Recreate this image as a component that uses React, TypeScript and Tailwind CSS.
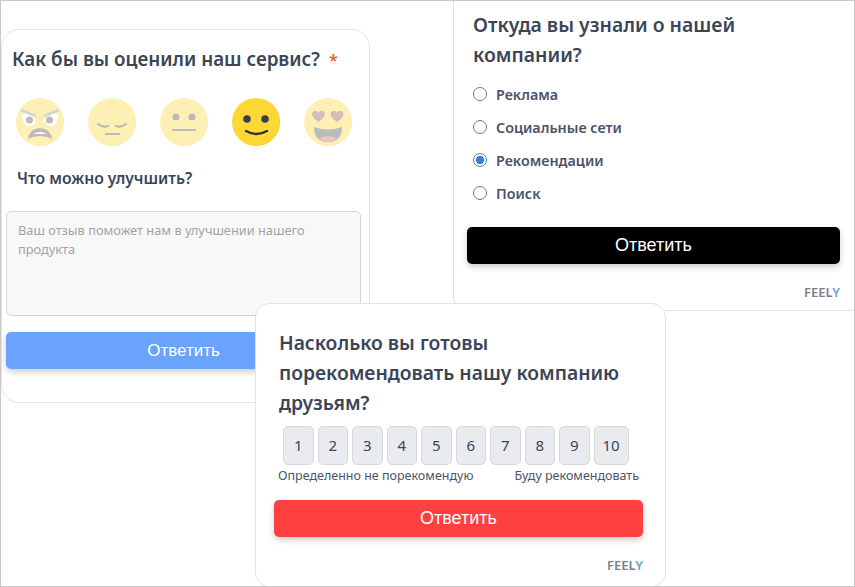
const font = "font-['Noto_Sans',sans-serif]"
const heading = 'font-semibold text-[#3a4557]'

function Face({ children, active }: { children: React.ReactNode; active?: boolean }) {
  return (
    <svg width="48" height="48" viewBox="0 0 48 48" className={active ? '' : 'opacity-[0.36]'}>
      <circle cx="24" cy="24" r="24" fill="#fdd835" />
      <path d="M34 2a24 24 0 0 1-22 43a24 24 0 0 0 36-21a24 24 0 0 0-14-22z" fill="#f9b92b" opacity="0.45" />
      {children}
    </svg>
  )
}

function Faces() {
  return (
    <div className="flex gap-[24px] ml-[14px] mt-[25px]">
      <Face>
        <path d="M6 16q8-2 14 6q-1 6-7 6q-7 0-7-12zM42 16q-8-2-14 6q1 6 7 6q7 0 7-12z" fill="#fff" />
        <path d="M5 12l15 6M43 12l-15 6" stroke="#8a8a8a" strokeWidth="2.5" fill="none" />
        <circle cx="13.5" cy="22" r="3.5" fill="#444" />
        <circle cx="33.5" cy="22" r="3.5" fill="#444" />
        <path d="M12 41q1-10 12-11q11 1 12 11q-6-3-12-3t-12 3z" fill="#444" />
        <path d="M17 36q7-4 14 0z" fill="#fff" />
      </Face>
      <Face>
        <path d="M9 20q4-3 8-4M39 20q-4-3-8-4" stroke="#f0b840" strokeWidth="1.2" fill="none" />
        <path d="M10 26q5 4 10 2M38 26q-5 4-10 2" stroke="#444" strokeWidth="2.2" fill="none" strokeLinecap="round" />
        <path d="M18 36h13" stroke="#444" strokeWidth="2.2" strokeLinecap="round" />
      </Face>
      <Face>
        <circle cx="16" cy="19" r="3.5" fill="#444" />
        <circle cx="32" cy="19" r="3.5" fill="#444" />
        <path d="M13 32h22" stroke="#444" strokeWidth="2.2" strokeLinecap="round" />
      </Face>
      <Face active>
        <circle cx="15" cy="21" r="3.8" fill="#3c3c50" />
        <circle cx="33" cy="21" r="3.8" fill="#3c3c50" />
        <path d="M14 33q10.500 6 21 0" stroke="#333" strokeWidth="2.5" fill="none" strokeLinecap="round" />
      </Face>
      <Face>
        <path d="M14.500 24c-4-3-6.500-5-6.500-8c0-3.500 5-4.500 6.500-1c1.500-3.500 6.500-2.500 6.500 1c0 3-2.500 5-6.500 8z" fill="#8a4a4a" />
        <path d="M33 24c-4-3-6.500-5-6.500-8c0-3.500 5-4.500 6.500-1c1.500-3.500 6.500-2.500 6.500 1c0 3-2.500 5-6.500 8z" fill="#8a4a4a" />
        <path d="M10 29q14 5 28 0q0 15-14 15t-14-15z" fill="#444" />
        <path d="M15 41q9-6 18 0q-4 3-9 3t-9-3z" fill="#d6604d" />
      </Face>
    </div>
  )
}

function SubmitButton({ color, className }: { color: string; className: string }) {
  return (
    <button
      className={`${color} ${className} h-[36.5px] rounded-[5px] text-white shadow-[0_3px_6px_rgba(0,0,0,0.2)] font-['Liberation_Sans',sans-serif]`}
    >
      Ответить
    </button>
  )
}

function Feely({ className }: { className: string }) {
  return (
    <div className={`${className} text-right text-[13px] font-semibold text-[#7b8088] leading-4`}>
      FEEL<span className="text-[#6f9fd8]">Y</span>
    </div>
  )
}

function RatingCard() {
  return (
    <div className="absolute left-0 top-[28px] w-[369px] h-[374px] bg-white border border-[#e3e4e6] rounded-[18px]">
      <h2 className={`ml-[10px] mt-[16px] text-[18.8px] leading-[26px] ${heading}`}>
        Как бы вы оценили наш сервис?<span className="ml-[9px] text-[16px] text-[#ef5b40]">*</span>
      </h2>
      <Faces />
      <p className={`ml-[15px] mt-[21px] text-[15.7px] leading-[22px] ${heading}`}>Что можно улучшить?</p>
      <div className="ml-[4px] mt-[22px] w-[355px] h-[105px] bg-[#f8f8f8] border border-[#d1d5db] rounded-[5px] pl-[11px] pr-[40px] py-[9px] text-[12.8px] leading-[19px] text-[#a3a3a3]">
        Ваш отзыв поможет нам в улучшении нашего продукта
      </div>
      <SubmitButton color="bg-[#6aa3fb] text-[17px]" className="block ml-[4px] mt-[16px] w-[355px]" />
    </div>
  )
}

function SourceCard() {
  const options = ['Реклама', 'Социальные сети', 'Рекомендации', 'Поиск']
  return (
    <div className="absolute left-[452px] top-[-21px] w-[410px] h-[331px] bg-white border border-[#dfe0e2] rounded-[14px]">
      <h2 className={`ml-[19px] mt-[29px] w-[300px] text-[19.4px] leading-[30px] ${heading}`}>
        Откуда вы узнали о нашей компании?
      </h2>
      <div className="ml-[19px] mt-[14px] flex flex-col gap-[11px]">
        {options.map((o) => (
          <label key={o} className="flex items-center h-[22px] text-[14.3px] font-semibold text-[#4a5468]">
            <input type="radio" name="src" defaultChecked={o === 'Рекомендации'} className="w-[14px] h-[14px] -ml-[0.5px] mr-[9.5px] mb-[3px] accent-[#3b7fc4]" />
            {o}
          </label>
        ))}
      </div>
      <SubmitButton color="bg-black text-[18px]" className="block ml-[13px] mt-[22px] w-[373px]" />
      <Feely className="mt-[20px] mr-[22px]" />
    </div>
  )
}

function NpsCard() {
  const scale = [1, 2, 3, 4, 5, 6, 7, 8, 9, 10]
  return (
    <div className="absolute left-[254px] top-[302px] w-[411px] h-[284px] bg-white border border-[#e3e4e6] rounded-[14px]">
      <h2 className={`ml-[23px] mt-[24px] w-[350px] text-[19.3px] leading-[30px] ${heading}`}>
        Насколько вы готовы порекомендовать нашу компанию друзьям?
      </h2>
      <div className="ml-[27px] mt-[8px] flex gap-[4px]">
        {scale.map((n) => (
          <div
            key={n}
            className={`${n === 10 ? 'w-[35px]' : 'w-[30.5px]'} h-[39px] flex items-center justify-center bg-[#e9ebee] border border-[#d8d9db] rounded-[5px] text-[15px] text-[#3a4557]`}
          >
            {n}
          </div>
        ))}
      </div>
      <div className="ml-[22px] mr-[26px] mt-[2px] flex justify-between text-[12.5px] leading-[18px] text-[#4b5563]">
        <span>Определенно не порекомендую</span>
        <span>Буду рекомендовать</span>
      </div>
      <SubmitButton color="bg-[#ff4040] text-[18px]" className="block ml-[18px] mt-[15px] w-[369px]" />
      <Feely className="mt-[20px] mr-[22px]" />
    </div>
  )
}

export default function App() {
  return (
    <div className={`${font} relative w-[855px] h-[587px] bg-white overflow-hidden border border-[#c9c9c9]`}>
      <RatingCard />
      <SourceCard />
      <NpsCard />
    </div>
  )
}
